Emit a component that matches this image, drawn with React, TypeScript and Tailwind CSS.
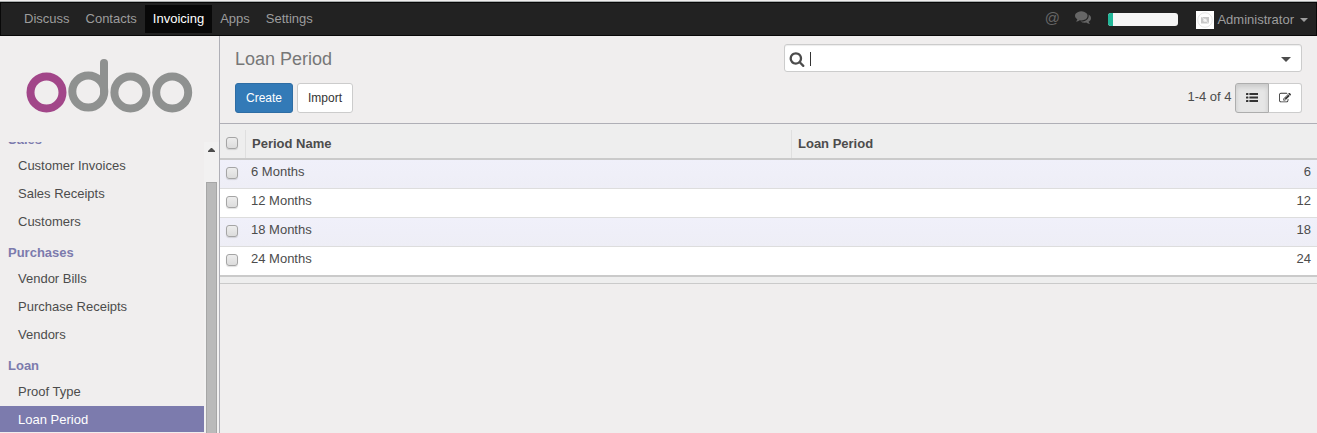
import React from "react";

const PATHS = {
  search:
    "M1216 832q0-185-131.5-316.5t-316.5-131.5-316.5 131.5-131.5 316.5 131.5 316.5 316.5 131.5 316.5-131.5 131.5-316.5zm512 832q0 52-38 90t-90 38q-54 0-90-38l-343-342q-179 124-399 124-143 0-273.5-55.5t-225-150-150-225-55.5-273.5 55.5-273.5 150-225 225-150 273.5-55.5 273.5 55.5 225 150 150 225 55.5 273.5q0 220-124 399l343 343q37 37 37 90z",
  edit:
    "M888 1184l116-116-152-152-116 116v56h96v96h56zm440-720q-16-16-33 1l-350 350q-17 17-1 33t33-1l350-350q17-17 1-33zm80 594v190q0 119-84.5 203.5t-203.5 84.5h-832q-119 0-203.5-84.5t-84.5-203.5v-832q0-119 84.5-203.5t203.5-84.5h832q63 0 117 25 15 7 18 23 3 17-9 29l-49 49q-14 14-32 8-23-6-45-6h-832q-66 0-113 47t-47 113v832q0 66 47 113t113 47h832q66 0 113-47t47-113v-126q0-13 9-22l64-64q15-15 35-7t20 29zm-96-738l288 288-672 672h-288v-288zm444 132l-92 92-288-288 92-92q28-28 68-28t68 28l152 152q28 28 28 68t-28 68z",
  comments:
    "M1408 768q0 139-94 257t-256.5 186.5-353.5 68.5q-86 0-176-16-124 88-278 128-36 9-86 16h-3q-11 0-20.5-8t-11.5-21q-1-3-1-6.5t.5-6.5 2-6l2.5-5 3.5-5.5 4-5 4.5-5 4-4.5q5-6 23-25t26-29.5 22.5-29 25-38.5 20.5-44q-124-72-195-177t-71-224q0-139 94-257t256.5-186.5 353.5-68.5 353.5 68.5 256.5 186.5 94 257zm384 256q0 120-71 224.5t-195 176.5q10 24 20.5 44t25 38.5 22.5 29 26 29.5 23 25q1 1 4 4.5t4.5 5 4 5 3.5 5.5l2.5 5 2 6 .5 6.5-1 6.5q-3 14-13 22t-22 7q-50-7-86-16-154-40-278-128-90 16-176 16-271 0-472-132 58 4 88 4 161 0 309-45t264-129q125-92 192-212t67-254q0-77-23-152 129 71 204 178t75 230z",
};

function Icon({ name, className }: { name: keyof typeof PATHS; className: string }) {
  return (
    <svg viewBox="0 0 1792 1792" fill="currentColor" className={className}>
      <path d={PATHS[name]} />
    </svg>
  );
}

function Caret({ className }: { className: string }) {
  return (
    <svg viewBox="0 0 10 5" fill="currentColor" preserveAspectRatio="none" className={className}>
      <path d="M0 0h10L5 5z" />
    </svg>
  );
}

function ListIcon() {
  return (
    <svg viewBox="0 0 12 9" fill="currentColor" className="-mt-px h-[9px] w-3">
      <rect x="0" y="0" width="2.4" height="2" rx="0.6" />
      <rect x="0" y="3.5" width="2.4" height="2" rx="0.6" />
      <rect x="0" y="7" width="2.4" height="2" rx="0.6" />
      <rect x="3.4" y="0" width="8.6" height="2" />
      <rect x="3.4" y="3.5" width="8.6" height="2" />
      <rect x="3.4" y="7" width="8.6" height="2" />
    </svg>
  );
}

function Logo() {
  return (
    <svg viewBox="0 0 166 56" fill="none" strokeWidth="8" className="ml-[26px] mt-[22px] h-14 w-[166px] shrink-0 overflow-visible">
      <circle cx="20.5" cy="34.4" r="16" stroke="#a24689" />
      <g stroke="#8f9190">
        <circle cx="62.3" cy="33.6" r="16" />
        <path d="M78 5v29" strokeLinecap="round" />
        <circle cx="104.4" cy="34.4" r="16" />
        <circle cx="146.2" cy="34.4" r="16" />
      </g>
    </svg>
  );
}

function Checkbox() {
  return (
    <span className="block size-3 rounded-[3px] border border-[#a5a5a5] bg-linear-to-b from-[#ededed] to-[#dcdcdc] shadow-[0_1px_1px_rgba(0,0,0,0.12)]" />
  );
}

const SECTIONS = [
  { title: "Sales", items: ["Customer Invoices", "Sales Receipts", "Customers"] },
  { title: "Purchases", items: ["Vendor Bills", "Purchase Receipts", "Vendors"] },
  { title: "Loan", items: ["Proof Type", "Loan Period"] },
];

const ROWS = [6, 12, 18, 24];

function TopBar() {
  return (
    <header className="flex h-[34px] shrink-0 border border-[#080808] bg-[#222] text-[#9d9d9d]">
      <nav className="flex pl-[15px] pt-0.5">
        {["Discuss", "Contacts", "Invoicing", "Apps", "Settings"].map((item) => (
          <a
            key={item}
            className={
              item === "Invoicing"
                ? "h-7 bg-[#080808] px-2 leading-7 text-white"
                : "h-7 px-2 leading-7"
            }
          >
            {item}
          </a>
        ))}
      </nav>
      <div className="ml-auto flex pr-2">
        <span className="mr-[15px] text-[15px] leading-[29px] text-[#666]">@</span>
        <Icon name="comments" className="mr-[17.5px] mt-[6px] size-4 text-[#666]" />
        <span className="mr-[18px] mt-[10px] flex h-[13px] w-[70px] overflow-hidden rounded-[3px] bg-[#f5f5f5]">
          <span className="w-[5px] bg-[#21b799]" />
        </span>
        <svg viewBox="0 0 18 18" className="mt-2 size-[18px]">
          <path fill="#fff" d="M0 0h18v18H0z" />
          <circle cx="9" cy="9" r="7.3" fill="none" stroke="#e6e6e6" />
          <path fill="#c8c8c8" d="M5 6h8v6.5H5z" />
          <circle cx="9" cy="9.3" r="1.8" fill="#eee" />
          <path stroke="#fff" strokeWidth="0.6" d="M4.5 5l9 8" />
        </svg>
        <span className="ml-[3px] leading-[34px]">Administrator</span>
        <Caret className="ml-1.5 mt-[15px] h-1 w-2" />
      </div>
    </header>
  );
}

function Sidebar() {
  return (
    <aside className="flex w-[220px] shrink-0 flex-col border-r border-[#afafb6]">
      <Logo />
      <div className="mt-7 flex min-h-0 grow overflow-hidden">
        <div className="-mt-4 w-[204px]">
          {SECTIONS.map((section) => (
            <section key={section.title}>
              <h2 className="h-[26px] pl-2 pt-[5px] font-bold leading-[18px] text-[#7c7bad]">{section.title}</h2>
              <ul className="mb-[5px]">
                {section.items.map((item) => (
                  <li
                    key={item}
                    className={
                      item === "Loan Period"
                        ? "h-[26px] bg-[#7c7bad] pl-[18px] leading-[28px] text-white"
                        : "mb-0.5 h-[26px] pl-[18px] leading-[28px]"
                    }
                  >
                    {item}
                  </li>
                ))}
              </ul>
            </section>
          ))}
        </div>
        <div className="flex w-[15px] flex-col bg-[#f2f1f1] pl-0.5">
          <svg viewBox="0 0 7 4" fill="#4c4c4c" className="ml-0.5 mt-[6px] h-1 w-[7px] shrink-0">
            <path d="M3 0h1l3 3v1H0V3z" />
          </svg>
          <div className="mt-[30px] w-[11px] grow border border-b-0 border-[#a6a6a6] bg-[#bababa]" />
        </div>
      </div>
    </aside>
  );
}

function ControlPanel() {
  return (
    <div className="flex h-[88px] shrink-0 justify-between border-b border-[#afafb6] pl-[15px] pr-[15px]">
      <div>
        <h1 className="mt-[10px] text-lg leading-[26px] text-[#777]">Loan Period</h1>
        <div className="mt-[11px] flex gap-1 text-xs">
          <button className="h-[30px] w-[58px] rounded-[3px] border border-[#2e6da4] bg-[#337ab7] text-white">Create</button>
          <button className="h-[30px] w-14 rounded-[3px] border border-[#ccc] bg-white text-[#333]">Import</button>
        </div>
      </div>
      <div className="flex flex-col items-end">
        <div className="mt-2 flex h-7 w-[518px] items-center rounded-[3px] border border-[#ccc] bg-white pl-1 pr-[10px] shadow-[inset_0_1px_1px_rgba(0,0,0,0.075)]">
          <Icon name="search" className="mt-px size-4" />
          <span className="ml-[5px] mt-0.5 h-[14px] w-px bg-[#333]" />
          <Caret className="ml-auto mt-[3px] h-[5px] w-[10px]" />
        </div>
        <div className="mt-[11px] flex">
          <span className="mr-[3.5px] leading-7">1-4 of 4</span>
          <button className="flex h-[30px] w-[34px] items-center justify-center rounded-l-[3px] border border-[#adadad] bg-[#e6e6e6] text-[#333] shadow-[inset_0_3px_5px_rgba(0,0,0,0.125)]">
            <ListIcon />
          </button>
          <button className="flex h-[30px] w-[33px] items-center justify-center rounded-r-[3px] border border-l-0 border-[#ccc] bg-white text-[#333]">
            <Icon name="edit" className="-mt-px size-3" />
          </button>
        </div>
      </div>
    </div>
  );
}

function ListView() {
  return (
    <div className="h-40 border-b border-[#cacaca] bg-[#eee]">
      <div className="flex h-9 border-b-2 border-[#cacaca] pt-1.5 font-bold">
        <div className="w-[26px] border-r border-[#dfdfdf] pl-1.5 pt-[7px]">
          <Checkbox />
        </div>
        <div className="w-[546px] border-r border-[#dfdfdf] pl-1.5 leading-[27px]">Period Name</div>
        <div className="pl-1.5 leading-[27px]">Loan Period</div>
      </div>
      <div className="border-b-2 border-[#cacaca]">
        {ROWS.map((months) => (
          <div
            key={months}
            className="flex h-[29px] border-b border-[#ddd] bg-white last:h-[28px] last:border-b-0 odd:bg-linear-to-b odd:from-[#f0f0fa] odd:to-[#eeeef6]"
          >
            <div className="w-[31px] pl-1.5 pt-[7px]">
              <Checkbox />
            </div>
            <span className="leading-[23px]">{months} Months</span>
            <span className="ml-auto pr-1.5 leading-[23px]">{months}</span>
          </div>
        ))}
      </div>
    </div>
  );
}

export default function App() {
  return (
    <div className="flex h-[433px] flex-col overflow-hidden bg-[#f0eeee] font-['Liberation_Sans',Arial,sans-serif] text-[13px] text-[#4c4c4c]">
      <div className="h-0.5 shrink-0 border-b border-[#a8acac] bg-[#f0eeee]" />
      <TopBar />
      <div className="flex min-h-0 grow">
        <Sidebar />
        <main className="min-w-0 grow">
          <ControlPanel />
          <ListView />
        </main>
      </div>
    </div>
  );
}
